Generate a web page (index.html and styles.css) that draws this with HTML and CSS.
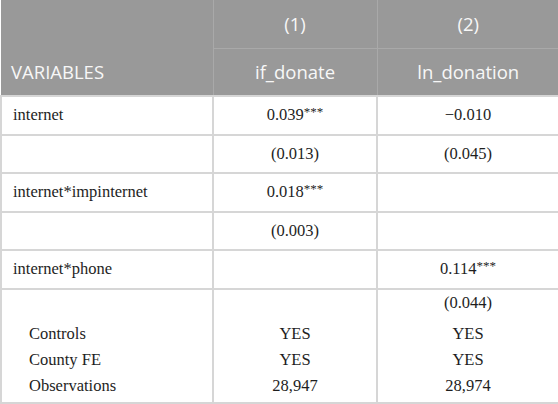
FILE: index.html
```html
<!DOCTYPE html>
<html>
<head>
<meta charset="utf-8">
<link rel="stylesheet" href="styles.css">
</head>
<body>
<table class="reg">
  <colgroup>
    <col class="c0">
    <col class="c1">
    <col class="c2">
  </colgroup>
  <thead>
    <tr class="h1">
      <th class="var" rowspan="2">VARIABLES</th>
      <th class="num">(1)</th>
      <th class="num">(2)</th>
    </tr>
    <tr class="h2">
      <th class="num">if_donate</th>
      <th class="num">ln_donation</th>
    </tr>
  </thead>
  <tbody>
    <tr>
      <td class="lab">internet</td>
      <td class="val">0.039<sup>***</sup></td>
      <td class="val">−0.010</td>
    </tr>
    <tr>
      <td class="lab"></td>
      <td class="val">(0.013)</td>
      <td class="val">(0.045)</td>
    </tr>
    <tr>
      <td class="lab">internet*impinternet</td>
      <td class="val">0.018<sup>***</sup></td>
      <td class="val"></td>
    </tr>
    <tr>
      <td class="lab"></td>
      <td class="val">(0.003)</td>
      <td class="val"></td>
    </tr>
    <tr>
      <td class="lab">internet*phone</td>
      <td class="val"></td>
      <td class="val">0.114<sup>***</sup></td>
    </tr>
    <tr class="last">
      <td class="lab">
        <div class="line first"></div>
        <div class="line ind">Controls</div>
        <div class="line ind">County FE</div>
        <div class="line ind">Observations</div>
      </td>
      <td class="val">
        <div class="line first"></div>
        <div class="line">YES</div>
        <div class="line">YES</div>
        <div class="line">28,947</div>
      </td>
      <td class="val">
        <div class="line first">(0.044)</div>
        <div class="line">YES</div>
        <div class="line">YES</div>
        <div class="line">28,974</div>
      </td>
    </tr>
  </tbody>
</table>
</body>
</html>
```
FILE: styles.css
```css
html, body {
  margin: 0;
  padding: 0;
  background: #ffffff;
}

.reg {
  width: 558px;
  border-collapse: collapse;
  table-layout: fixed;
  font-family: "Liberation Serif", "Times New Roman", serif;
  font-size: 16.5px;
  color: #1e1e1e;
}

.c0 { width: 212px; }
.c1 { width: 164px; }
.c2 { width: 182px; }

thead th {
  background: #999999;
  color: #f7f7f7;
  font-family: "Open Sans", "Noto Sans", sans-serif;
  font-weight: 400;
  font-size: 18.5px;
  height: 48px;
  padding: 0;
  box-sizing: border-box;
  border: 1px solid #a9a9a9;
  border-top: none;
}

thead th.var {
  text-align: left;
  vertical-align: bottom;
  padding: 0 0 11px 10px;
  border-left: none;
}

thead th.num {
  text-align: center;
  vertical-align: middle;
}

thead tr.h1 th:last-child,
thead tr.h2 th:last-child {
  border-right: none;
}

thead tr.h2 th {
  border-bottom: none;
}

tbody td {
  height: 36.5px;
  padding: 0;
  border: 2px solid #d6d6d6;
  vertical-align: middle;
}

tbody td.lab {
  text-align: left;
  padding-left: 11px;
}

tbody td.val {
  text-align: center;
}

sup {
  font-size: 13px;
  line-height: 0;
  vertical-align: 4px;
}

tbody tr.last td {
  height: 112px;
  vertical-align: top;
  padding-top: 0;
}

.line {
  height: 26px;
  line-height: 26px;
}

.line.first {
  margin-bottom: 5px;
}

.line.ind {
  padding-left: 16px;
}
```
